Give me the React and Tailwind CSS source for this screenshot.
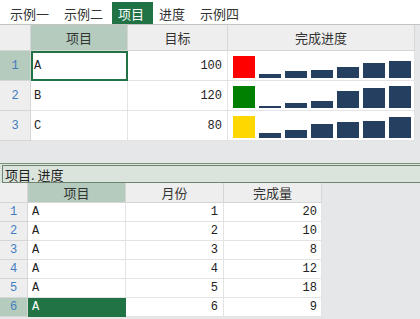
import React from "react";

const cjk = "font-['Noto_Sans_CJK_SC',sans-serif]";
const mono = "font-['Liberation_Mono','Noto_Sans_CJK_SC',monospace]";

const rows1 = [
  { n: 1, name: "A", target: 100, color: "bg-[#ff0000]", bars: [4, 7, 8, 11, 15, 17] },
  { n: 2, name: "B", target: 120, color: "bg-[#008000]", bars: [2, 5, 7, 17, 20, 22] },
  { n: 3, name: "C", target: 80, color: "bg-[#ffd700]", bars: [5, 8, 14, 16, 17, 21] },
];

const rows2 = [
  { n: 1, m: 1, v: 20 },
  { n: 2, m: 2, v: 10 },
  { n: 3, m: 3, v: 8 },
  { n: 4, m: 4, v: 12 },
  { n: 5, m: 5, v: 18 },
  { n: 6, m: 6, v: 9 },
];

function Tabs() {
  const tabs = ["示例一", "示例二", "项目", "进度", "示例四"];
  return (
    <div className="h-[25px] bg-white border-b border-[#c3c3c3] flex items-end pl-[4px]">
      {tabs.map((t) => (
        <div
          key={t}
          className={
            "h-[22px] flex items-center pl-[6px] pr-[9px] text-[13px] leading-none " +
            (t === "项目" ? "bg-[#217346] text-white" : "text-[#333333]")
          }
        >
          {t}
        </div>
      ))}
    </div>
  );
}

function TopGrid() {
  return (
    <div className="bg-white">
      <div className="flex h-[26px] text-[13px] text-[#333333]">
        <div className="w-[31px] bg-[#eeeeee] border-r border-b border-[#d6d6d6]" />
        <div className="w-[97px] bg-[#b4cbbd] border-r border-b border-[#d6d6d6] flex items-center justify-center">项目</div>
        <div className="w-[100px] bg-[#eeeeee] border-r border-b border-[#d6d6d6] flex items-center justify-center">目标</div>
        <div className="w-[187px] bg-[#eeeeee] border-r border-b border-[#d6d6d6] flex items-center justify-center">完成进度</div>
        <div className="flex-1 bg-[#e6e7e8]" />
      </div>
      {rows1.map((r) => (
        <div key={r.n} className="flex h-[30px]">
          <div
            className={
              "w-[31px] border-r border-b border-[#d6d6d6] flex items-center justify-center text-[12px] text-[#3f7cbf] " +
              mono +
              (r.n === 1 ? " bg-[#b4cbbd]" : " bg-[#eeeeee]")
            }
          >
            {r.n}
          </div>
          <div className={"relative w-[97px] border-r border-b border-[#e3e3e3] flex items-center pl-[3px] text-[12px] text-[#222222] " + mono}>
            {r.name}
            {r.n === 1 && (
              <div className="absolute top-0 left-0 right-[-1px] bottom-[-1px] border-2 border-[#217346]" />
            )}
          </div>
          <div className={"w-[100px] border-r border-b border-[#e3e3e3] flex items-center justify-end pr-[5px] text-[12px] text-[#222222] " + mono}>
            {r.target}
          </div>
          <div className="w-[187px] border-r border-b border-[#e3e3e3] flex items-end pl-[5px] pb-[2px] gap-[4px]">
            <div className={"w-[22px] h-[22px] " + r.color} />
            {r.bars.map((h, i) => (
              <div key={i} className="w-[22px] bg-[#243f60]" style={{ height: h }} />
            ))}
          </div>
          <div className="flex-1 bg-[#e6e7e8]" />
        </div>
      ))}
    </div>
  );
}

function FormulaBar() {
  return (
    <div className="h-[20px] bg-[#dae4dc] border-t border-[#7a8f7d] pt-[1px]">
      <div className="h-[18px] ml-[2px] mr-[-4px] border border-[#6e8471] flex items-center pl-[2px] text-[13px] text-[#222222] leading-none">
        项目. 进度
      </div>
    </div>
  );
}

function BottomGrid() {
  return (
    <div>
      <div className="flex h-[20px] text-[13px] text-[#333333]">
        <div className="w-[28px] bg-[#eeeeee] border-r border-b border-[#d6d6d6]" />
        <div className="w-[98px] bg-[#b4cbbd] border-r border-b border-[#d6d6d6] flex items-center justify-center leading-none">项目</div>
        <div className="w-[98px] bg-[#eeeeee] border-r border-b border-[#d6d6d6] flex items-center justify-center leading-none">月份</div>
        <div className="w-[98px] bg-[#eeeeee] border-r border-b border-[#d6d6d6] flex items-center justify-center leading-none">完成量</div>
      </div>
      {rows2.map((r) => (
        <div key={r.n} className={"flex h-[19px] text-[12px] " + mono}>
          <div
            className={
              "w-[28px] border-r border-b border-[#d6d6d6] flex items-center justify-center text-[#3f7cbf] " +
              (r.n === 6 ? "bg-[#b4cbbd]" : "bg-[#eeeeee]")
            }
          >
            {r.n}
          </div>
          <div
            className={
              "w-[98px] border-r border-b flex items-center pl-[4px] " +
              (r.n === 6 ? "bg-[#217346] text-white border-[#217346]" : "bg-white text-[#222222] border-[#e3e3e3]")
            }
          >
            A
          </div>
          <div className="w-[98px] bg-white border-r border-b border-[#e3e3e3] flex items-center justify-end pr-[5px] text-[#222222]">
            {r.m}
          </div>
          <div className="w-[98px] bg-white border-r border-b border-[#e3e3e3] flex items-center justify-end pr-[4px] text-[#222222]">
            {r.v}
          </div>
        </div>
      ))}
    </div>
  );
}

export default function App() {
  return (
    <div className={"w-[420px] h-[319px] overflow-hidden bg-[#e6e7e8] " + cjk}>
      <Tabs />
      <TopGrid />
      <div className="h-[22px]" />
      <FormulaBar />
      <BottomGrid />
    </div>
  );
}
